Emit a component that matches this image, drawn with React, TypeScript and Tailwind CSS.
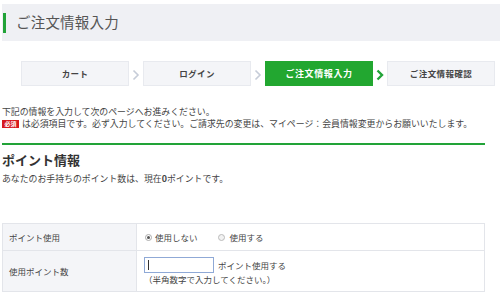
import React from 'react';

const steps = [
  { label: 'カート', active: false },
  { label: 'ログイン', active: false },
  { label: 'ご注文情報入力', active: true },
  { label: 'ご注文情報確認', active: false },
];

function Chevron({ active }: { active: boolean }) {
  return (
    <svg width="8" height="12" viewBox="0 0 8 12" className="block">
      <path
        d="M1.5 1.5 L6 6 L1.5 10.5"
        fill="none"
        stroke={active ? '#22a338' : '#c6ccd8'}
        strokeWidth={active ? 2.4 : 1.6}
      />
    </svg>
  );
}

export default function App() {
  return (
    <div
      className="w-[500px] h-[297px] overflow-hidden bg-white text-[#333]"
      style={{ fontFamily: '"Noto Sans CJK JP", "Noto Sans", sans-serif' }}
    >
      {/* page title */}
      <div className="mt-[4px] ml-[2px] h-[37px] bg-[#eff0f4] flex items-center">
        <div className="w-[3px] h-[20px] bg-[#22a338] ml-[1px]" />
        <h1 className="ml-[10px] text-[14.5px] leading-none text-[#555] tracking-[0.2px]">ご注文情報入力</h1>
      </div>

      {/* steps */}
      <div className="mt-[20px] pl-[21px] flex items-center">
        {steps.map((s, i) => (
          <React.Fragment key={s.label}>
            <div
              className={
                s.active
                  ? 'w-[108px] h-[25px] flex items-center justify-center bg-[#22a730] text-white text-[9px] font-bold tracking-[0.6px]'
                  : 'w-[108px] h-[25px] flex items-center justify-center bg-[#f4f5f8] border border-[#e8eaef] text-[#444] text-[8.5px] font-bold tracking-[0.4px]'
              }
            >
              {s.label}
            </div>
            {i < steps.length - 1 && (
              <div className="w-[14px] flex items-center justify-center pt-[2px]">
                <Chevron active={s.active} />
              </div>
            )}
          </React.Fragment>
        ))}
      </div>

      {/* notes */}
      <div className="mt-[20px] ml-[2px] text-[8.9px] leading-[12px] text-[#444]">
        <p>下記の情報を入力して次のページへお進みください。</p>
        <p className="flex items-center">
          <span className="inline-flex items-center justify-center w-[17px] h-[8px] bg-[#d7191f] text-white text-[6px] font-bold leading-none mr-[3px]">
            必須
          </span>
          は必須項目です。必ず入力してください。ご請求先の変更は、マイページ：会員情報変更からお願いいたします。
        </p>
      </div>

      <div className="mt-[13px] ml-[2px] w-[483px] h-[2px] bg-[#22a338]" />

      {/* point info */}
      <h2 className="mt-[7px] ml-[2px] text-[13px] leading-[16px] font-bold text-[#333]">ポイント情報</h2>
      <p className="mt-[5px] ml-[2px] text-[8.9px] leading-[11px] text-[#444]">
        あなたのお手持ちのポイント数は、現在<span className="font-bold">0</span>ポイントです。
      </p>

      <table className="mt-[39px] ml-[2px] w-[483px] border-collapse text-[8.5px] text-[#444]">
        <tbody>
          <tr className="h-[27px]">
            <th className="w-[134px] bg-[#f4f5f8] border border-[#e3e5ea] text-left font-normal pl-[6px]">ポイント使用</th>
            <td className="border border-[#e3e5ea] pl-[8px]">
              <div className="flex items-center">
                <span className="w-[7px] h-[7px] rounded-full border border-[#aaa] bg-white flex items-center justify-center">
                  <span className="w-[3px] h-[3px] rounded-full bg-[#555]" />
                </span>
                <span className="ml-[3px]">使用しない</span>
                <span className="ml-[20px] w-[7px] h-[7px] rounded-full border border-[#bbb] bg-[#f2f2f2]" />
                <span className="ml-[5px]">使用する</span>
              </div>
            </td>
          </tr>
          <tr className="h-[41px]">
            <th className="bg-[#f4f5f8] border border-[#e3e5ea] text-left font-normal pl-[6px]">使用ポイント数</th>
            <td className="border border-[#e3e5ea] pl-[7px]">
              <div className="flex items-center">
                <div className="w-[70px] h-[16px] border border-[#8fa9d6] bg-white flex items-center pl-[3px]">
                  <span className="w-[1px] h-[10px] bg-[#333]" />
                </div>
                <span className="ml-[4px]">ポイント使用する</span>
              </div>
              <p className="mt-[1px] leading-[11px]">（半角数字で入力してください。）</p>
            </td>
          </tr>
        </tbody>
      </table>
    </div>
  );
}
